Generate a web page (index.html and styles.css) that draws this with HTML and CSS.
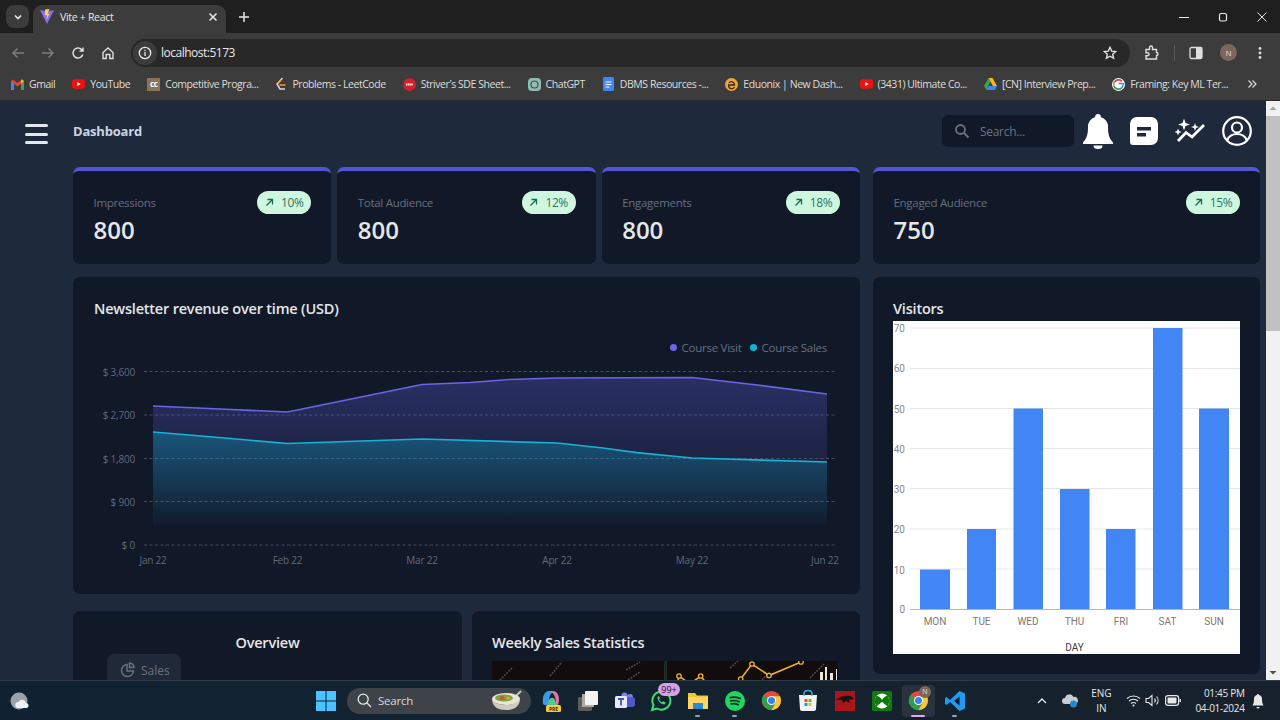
FILE: index.html
```html
<!DOCTYPE html>
<html>
<head>
<title>Vite + React</title>
<meta charset="utf-8" />
<link rel="stylesheet" href="styles.css">
</head>
<body>
<svg class="defs" width="0" height="0">
  <defs>
    <symbol id="chrome" viewBox="0 0 24 24">
      <circle cx="12" cy="12" r="11" fill="#e5483c"/>
      <path d="M12 12 2.5 17.5A11 11 0 0 1 3 5.6Z" fill="#2f9e4f"/>
      <path d="M12 12 2.5 17.5A11 11 0 0 0 12 23l5.5-9Z" fill="#2f9e4f"/>
      <path d="M12 7h9.6A11 11 0 0 1 12 23l5-9Z" fill="#f9c933"/>
      <circle cx="12" cy="12" r="5.2" fill="#fff"/>
      <circle cx="12" cy="12" r="4" fill="#3b82e8"/>
    </symbol>
    <symbol id="yt" viewBox="0 0 14 12">
      <rect y="1" width="14" height="10" rx="3" fill="#f01010"/>
      <path d="M5.6 3.8v4.4L9.4 6Z" fill="#fff"/>
    </symbol>
  </defs>
</svg>

<div class="tabstrip">
  <div class="tabmenu"><svg width="10" height="10" viewBox="0 0 10 10"><path d="M2 3.5 5 6.5 8 3.5" fill="none" stroke="#e8e8e8" stroke-width="1.6"/></svg></div>
  <div class="tab">
    <svg width="14" height="15" viewBox="0 0 14 15"><path d="M0 1 7 15 14 1 7 2.5Z" fill="#8a6cf5"/><path d="M5 .5 9.5 0 7.6 5 9.5 4.5 6.5 11 7 6 5 6.5Z" fill="#fcd34d"/></svg>
    <span class="tabtitle">Vite + React</span>
    <svg class="tabclose" width="10" height="10" viewBox="0 0 10 10"><path d="M1.5 1.5 8.5 8.5M8.5 1.5 1.5 8.5" stroke="#e8e8e8" stroke-width="1.5"/></svg>
  </div>
  <svg class="newtab" width="12" height="12" viewBox="0 0 12 12"><path d="M6 1v10M1 6h10" stroke="#e8e8e8" stroke-width="1.5"/></svg>
  <div class="winbtns">
    <svg width="10" height="10" viewBox="0 0 10 10"><path d="M0 5.5h10" stroke="#e8e8e8"/></svg>
    <svg width="10" height="10" viewBox="0 0 10 10"><rect x="1.5" y="1.5" width="7" height="7.5" rx="1.5" fill="none" stroke="#e8e8e8" stroke-width="1.2"/></svg>
    <svg width="10" height="10" viewBox="0 0 10 10"><path d="M.5.5l9 9M9.5.5l-9 9" stroke="#e8e8e8"/></svg>
  </div>
</div>

<div class="toolbar">
  <svg class="navicon" width="14" height="14" viewBox="0 0 14 14"><path d="M13 7H2M6.5 2.5 2 7l4.500 4.500" fill="none" stroke="#7e7e7e" stroke-width="1.5"/></svg>
  <svg class="navicon" width="14" height="14" viewBox="0 0 14 14"><path d="M1 7h11M7.500 2.500 12 7l-4.500 4.500" fill="none" stroke="#7e7e7e" stroke-width="1.500"/></svg>
  <svg class="navicon" width="14" height="14" viewBox="0 0 14 14"><path d="M11.800 8.500A5 5 0 1 1 10.500 3.400L12 5M12 1.500V5H8.500" fill="none" stroke="#dedede" stroke-width="1.500"/></svg>
  <svg class="navicon" width="14" height="14" viewBox="0 0 14 14"><path d="M2 6.500 7 2l5 4.500V12.500H8.800V8.500H5.200v4H2Z" fill="none" stroke="#dedede" stroke-width="1.400"/></svg>
  <div class="omnibox">
    <span class="siteinfo"><svg width="14" height="14" viewBox="0 0 14 14"><circle cx="7" cy="7" r="5.700" fill="none" stroke="#e8e8e8" stroke-width="1.300"/><path d="M7 6v4M7 3.800v1.200" stroke="#e8e8e8" stroke-width="1.300"/></svg></span>
    <span class="url">localhost:5173</span>
    <svg class="star" width="14" height="14" viewBox="0 0 14 14"><path d="M7 1.300 8.700 5.100 12.800 5.500 9.700 8.200 10.600 12.300 7 10.200 3.400 12.300 4.300 8.200 1.200 5.500 5.300 5.100Z" fill="none" stroke="#e8e8e8" stroke-width="1.300"/></svg>
  </div>
  <div class="toolright">
    <svg width="16" height="16" viewBox="0 0 16 16"><path d="M2 4.500H5.500V2.500A1.500 1.500 0 0 1 8.500 2.500V4.500H12.500V7.500A1.500 1.500 0 0 1 12.500 10.500V14H2V10.800H3.500A1.500 1.500 0 0 0 3.500 7.800H2Z" fill="none" stroke="#dedede" stroke-width="1.400"/></svg>
    <span class="toolsep"></span>
    <svg width="14" height="14" viewBox="0 0 14 14"><rect x="1" y="1.500" width="12" height="11" rx="1.500" fill="none" stroke="#dedede" stroke-width="1.300"/><rect x="7" y="1.500" width="6" height="11" fill="#dedede"/></svg>
    <span class="avatar">N</span>
    <svg class="toolmenu" width="4" height="14" viewBox="0 0 4 14"><circle cx="2" cy="2.500" r="1.400" fill="#dedede"/><circle cx="2" cy="7" r="1.400" fill="#dedede"/><circle cx="2" cy="11.500" r="1.400" fill="#dedede"/></svg>
  </div>
</div>

<div class="bookmarks">
  <span class="mark"><svg width="13" height="11" viewBox="0 0 13 11"><path d="M0 2v9h3V5L6.500 7.500 10 5v6h3V2L11 .5 6.500 4 2 .5Z" fill="#ea4335"/><path d="M0 2v9h3V5Z" fill="#4285f4"/><path d="M13 2v9h-3V5Z" fill="#34a853"/><path d="M13 2 11 .500 10 1.300V5Z" fill="#fbbc04"/></svg>Gmail</span>
  <span class="mark"><svg width="13" height="12"><use href="#yt"/></svg>YouTube</span>
  <span class="mark"><span class="ccbox">cc</span>Competitive Progra...</span>
  <span class="mark"><svg width="12" height="14" viewBox="0 0 12 14"><path d="M7.500 1 2 7l3 5h5" fill="none" stroke="#d9d9d9" stroke-width="1.500"/><path d="M4.500 8h6" stroke="#f89f1b" stroke-width="1.500"/><path d="M3 6.500 6 3" stroke="#f89f1b" stroke-width="1.500"/></svg>Problems - LeetCode</span>
  <span class="mark"><svg width="13" height="13" viewBox="0 0 13 13"><circle cx="6.500" cy="6.500" r="6.500" fill="#d71f2c"/><path d="M3 6.500h7" stroke="#fff" stroke-width="1.800" stroke-dasharray="1.500 .6"/></svg>Striver's SDE Sheet...</span>
  <span class="mark"><svg width="13" height="13" viewBox="0 0 13 13"><rect width="13" height="13" rx="4" fill="#8fbcae"/><circle cx="6.500" cy="6.500" r="3.500" fill="none" stroke="#36584f" stroke-width="1.200"/></svg>ChatGPT</span>
  <span class="mark"><svg width="13" height="14" viewBox="0 0 13 14"><rect x="1" width="11" height="14" rx="1.500" fill="#4285f4"/><path d="M3.500 5h6M3.500 7.500h6M3.500 10h4" stroke="#fff" stroke-width="1.200"/></svg>DBMS Resources -...</span>
  <span class="mark"><svg width="13" height="13" viewBox="0 0 13 13"><circle cx="6.500" cy="6.500" r="6.500" fill="#f0a63c"/><path d="M3 7h6.500A3.200 3.200 0 0 0 3.800 4.800M3.500 7.500A3.200 3.200 0 0 0 9.500 9" fill="none" stroke="#3a2a10" stroke-width="1.300"/></svg>Eduonix | New Dash...</span>
  <span class="mark"><svg width="13" height="12"><use href="#yt"/></svg>(3431) Ultimate Co...</span>
  <span class="mark"><svg width="13" height="12" viewBox="0 0 13 12"><path d="M4.500 0h4L13 8H9Z" fill="#fbbc04"/><path d="M4.500 0 0 8l2 3.500L6.500 3.500Z" fill="#34a853"/><path d="M2 12 4.200 8H13l-2 4Z" fill="#4285f4"/></svg>[CN] Interview Prep...</span>
  <span class="mark"><svg width="13" height="13" viewBox="0 0 13 13"><circle cx="6.500" cy="6.500" r="6.500" fill="#fff"/><path d="M6.600 5.500h4.500v1.100A4.700 4.700 0 1 1 9.800 3.200" fill="none" stroke="#4285f4" stroke-width="1.500"/><path d="M2.300 4.500A4.700 4.700 0 0 1 9.800 3.200" fill="none" stroke="#ea4335" stroke-width="1.500"/><path d="M2.300 8.500A4.700 4.700 0 0 1 2.300 4.500" fill="none" stroke="#fbbc04" stroke-width="1.500"/><path d="M2.300 8.500A4.700 4.700 0 0 0 9.800 9.800" fill="none" stroke="#34a853" stroke-width="1.500"/></svg>Framing: Key ML Ter...</span>
  <svg class="moremarks" width="10" height="10" viewBox="0 0 10 10"><path d="M1.500 1.500 5 5 1.500 8.500M5.500 1.500 9 5 5.500 8.500" fill="none" stroke="#dedede" stroke-width="1.200"/></svg>
</div>

<div class="viewport">
  <div class="page">
    <aside class="sidebar">
      <div class="burger"><span></span><span></span><span></span></div>
    </aside>
    <main class="content">
      <header class="topbar">
        <span class="pagetitle">Dashboard</span>
        <div class="topactions">
          <div class="searchbox">
            <svg width="16" height="16" viewBox="0 0 16 16"><circle cx="6.500" cy="6.500" r="4.500" fill="none" stroke="#6b7280" stroke-width="1.800"/><path d="M10 10l4.500 4.500" stroke="#6b7280" stroke-width="2"/></svg>
            <span>Search...</span>
          </div>
          <svg class="bell" width="30" height="35" viewBox="0 0 30 35"><path d="M15 0a2.800 2.800 0 0 1 2.800 3A10 10 0 0 1 25 13c0 7 1 11 5 15.500V30H0v-1.500C4 24 5 20 5 13a10 10 0 0 1 7.200-10A2.800 2.800 0 0 1 15 0Z" fill="#fff"/><path d="M10.500 31.500h9a4.500 3.500 0 0 1-9 0Z" fill="#fff"/></svg>
          <svg class="chat" width="28" height="28" viewBox="0 0 28 28"><path d="M7 0h14a7 7 0 0 1 7 7v14a7 7 0 0 1-7 7H3a3 3 0 0 1-3-3V7a7 7 0 0 1 7-7Z" fill="#fff"/><path d="M7 10h14v3.500H7ZM7 16h9v3.500H7Z" fill="#1e293b"/></svg>
          <svg class="spark" width="30" height="28" viewBox="0 0 30 28"><path d="M3 24 11 15.500 17 20 29 8" fill="none" stroke="#fff" stroke-width="2.800"/><path d="M9 1.500 10.500 6 15 7.500 10.500 9 9 13.500 7.500 9 3 7.500 7.500 6ZM20 6 21 9 24 10 21 11 20 14 19 11 16 10 19 9ZM3 11.500 4 14 6.500 15 4 16 3 18.500 2 16-.5 15 2 14Z" fill="#fff"/></svg>
          <svg class="user" width="30" height="30" viewBox="0 0 30 30"><circle cx="15" cy="15" r="13.800" fill="none" stroke="#fff" stroke-width="2.200"/><circle cx="15" cy="11.500" r="5" fill="none" stroke="#fff" stroke-width="2.200"/><path d="M5 24.500c2-5 6-6.500 10-6.500s8 1.500 10 6.500" fill="none" stroke="#fff" stroke-width="2.200"/></svg>
        </div>
      </header>

      <div class="columns">
        <div class="leftcol">
          <div class="statrow">
            <div class="card stat">
              <div class="statinfo"><span class="statlabel">Impressions</span><span class="statvalue">800</span></div>
              <span class="pill"><svg width="9" height="9" viewBox="0 0 9 9"><path d="M1.500 7.500 7 2M2.500 1.500H7.500V6.500" fill="none" stroke="#166b55" stroke-width="1.300"/></svg>10%</span>
            </div>
            <div class="card stat">
              <div class="statinfo"><span class="statlabel">Total Audience</span><span class="statvalue">800</span></div>
              <span class="pill"><svg width="9" height="9" viewBox="0 0 9 9"><path d="M1.500 7.500 7 2M2.500 1.500H7.500V6.500" fill="none" stroke="#166b55" stroke-width="1.300"/></svg>12%</span>
            </div>
            <div class="card stat">
              <div class="statinfo"><span class="statlabel">Engagements</span><span class="statvalue">800</span></div>
              <span class="pill"><svg width="9" height="9" viewBox="0 0 9 9"><path d="M1.500 7.500 7 2M2.500 1.500H7.500V6.500" fill="none" stroke="#166b55" stroke-width="1.300"/></svg>18%</span>
            </div>
          </div>

          <section class="card revenue">
            <h2 class="cardtitle">Newsletter revenue over time (USD)</h2>
            <div class="legend">
              <span class="legenditem"><i class="dot dot-visit"></i>Course Visit</span>
              <span class="legenditem"><i class="dot dot-sales"></i>Course Sales</span>
            </div>
            <svg class="areachart" width="787" height="220" viewBox="73 360 787 220">
              <defs>
                <linearGradient id="gradVisit" x1="0" y1="377" x2="0" y2="530" gradientUnits="userSpaceOnUse">
                  <stop offset="0" stop-color="#6366f1" stop-opacity=".3"/>
                  <stop offset="1" stop-color="#6366f1" stop-opacity="0"/>
                </linearGradient>
                <linearGradient id="gradSales" x1="0" y1="432" x2="0" y2="530" gradientUnits="userSpaceOnUse">
                  <stop offset="0" stop-color="#06b6d4" stop-opacity=".32"/>
                  <stop offset="1" stop-color="#06b6d4" stop-opacity="0"/>
                </linearGradient>
              </defs>
              <g class="gridlines">
                <path d="M144 371.500H836M144 415H836M144 458.500H836M144 501.500H836M144 545H836"/>
              </g>
              <path d="M153 406 220 409 287.500 412 422 384.500 470 382.500 557 378 692 377.500 757 385 827 394V530H153Z" fill="url(#gradVisit)"/>
              <path d="M153 432 213 437 287.500 443.500 422 439 557 443 603 448 637 452.700 692 458 827 462V530H153Z" fill="url(#gradSales)"/>
              <path d="M153 406 220 409 287.500 412 422 384.500 470 382.500 510 379.500 557 378 692 377.500 757 385 827 394" fill="none" stroke="#6c63e8" stroke-width="1.700"/>
              <path d="M153 432 213 437 287.500 443.500 422 439 557 443 603 448 637 452.700 692 458 827 462" fill="none" stroke="#14b4d2" stroke-width="1.700"/>
              <g class="yaxis">
                <text x="135" y="376">$ 3,600</text>
                <text x="135" y="419">$ 2,700</text>
                <text x="135" y="462.500">$ 1,800</text>
                <text x="135" y="506">$ 900</text>
                <text x="135" y="549">$ 0</text>
              </g>
              <g class="xaxis">
                <text x="153" y="564">Jan 22</text>
                <text x="287.500" y="564">Feb 22</text>
                <text x="422" y="564">Mar 22</text>
                <text x="557" y="564">Apr 22</text>
                <text x="692" y="564">May 22</text>
                <text x="825" y="564">Jun 22</text>
              </g>
            </svg>
          </section>

          <div class="bottomrow">
            <section class="card overview">
              <h2 class="cardtitle centered">Overview</h2>
              <div class="salestab">
                <svg width="16" height="16" viewBox="0 0 16 16"><path d="M7 2.500a6 6 0 1 0 6.500 6.500H7Z" fill="none" stroke="#6b7280" stroke-width="1.500"/><path d="M9.500 1v4.500H14A5 5 0 0 0 9.500 1Z" fill="none" stroke="#6b7280" stroke-width="1.500"/></svg>
                <span>Sales</span>
              </div>
            </section>
            <section class="card weekly">
              <h2 class="cardtitle">Weekly Sales Statistics</h2>
              <svg class="weeklyimg" width="346" height="60" viewBox="492 661 346 60">
                <rect x="492" y="661" width="346" height="60" fill="#120c0c"/>
                <path d="M500 680 512 668M550 676 562 662M626 670 640 662M730 668 738 661M628 680 640 672M762 680 770 672M810 678 824 664" stroke="#4a4a4a" stroke-width="1.500" stroke-dasharray="2 1"/>
                <path d="M664 661h3v24h-3Z" fill="#1d2a22"/>
                <path d="M676 690 679 676 690 684 700.700 676 712 690M731 690 740.700 679 752 664 769 675.500 801 662" fill="none" stroke="#eeb02f" stroke-width="1.600"/>
                <g fill="#120c0c" stroke="#eeb02f" stroke-width="1.300">
                  <circle cx="679" cy="676" r="2.200"/><circle cx="700.700" cy="676" r="2.200"/><circle cx="740.700" cy="679" r="2.200"/><circle cx="752" cy="664" r="2.200"/><circle cx="769" cy="675.500" r="2.200"/><circle cx="801" cy="662" r="2.200"/>
                </g>
                <path d="M820 672h3v8h-3ZM825 667h2v13h-2ZM830 673h3v7h-3ZM836 669h1v11h-1Z" fill="#eee6d4"/>
              </svg>
            </section>
          </div>
        </div>

        <div class="rightcol">
          <div class="card stat">
            <div class="statinfo"><span class="statlabel">Engaged Audience</span><span class="statvalue">750</span></div>
            <span class="pill"><svg width="9" height="9" viewBox="0 0 9 9"><path d="M1.500 7.500 7 2M2.500 1.500H7.500V6.500" fill="none" stroke="#166b55" stroke-width="1.300"/></svg>15%</span>
          </div>
          <section class="card visitors">
            <h2 class="cardtitle">Visitors</h2>
            <svg class="barchart" width="347" height="333" viewBox="893 321 347 333">
              <rect x="893" y="321" width="347" height="333" fill="#fff"/>
              <path d="M910 328H1240M910 368.500H1240M910 408.500H1240M910 448.500H1240M910 488.500H1240M910 529H1240M910 569H1240" stroke="#e6e6e6"/>
              <g fill="#4285f4">
                <rect x="920" y="569.500" width="30" height="40"/>
                <rect x="967" y="529" width="29" height="80.500"/>
                <rect x="1013.500" y="408.500" width="29.500" height="201"/>
                <rect x="1060" y="489" width="29.500" height="120.500"/>
                <rect x="1106" y="529" width="29.500" height="80.500"/>
                <rect x="1153" y="328" width="29.500" height="281.500"/>
                <rect x="1199" y="408.500" width="30" height="201"/>
              </g>
              <path d="M910 609.500H1240" stroke="#b5b5bd"/>
              <g class="bary">
                <text x="905" y="332">70</text>
                <text x="905" y="372">60</text>
                <text x="905" y="412.500">50</text>
                <text x="905" y="452.500">40</text>
                <text x="905" y="493">30</text>
                <text x="905" y="533">20</text>
                <text x="905" y="573.500">10</text>
                <text x="905" y="613">0</text>
              </g>
              <g class="barx">
                <text x="935" y="624.500">MON</text>
                <text x="981.500" y="624.500">TUE</text>
                <text x="1028" y="624.500">WED</text>
                <text x="1074.500" y="624.500">THU</text>
                <text x="1121" y="624.500">FRI</text>
                <text x="1167.500" y="624.500">SAT</text>
                <text x="1214" y="624.500">SUN</text>
              </g>
              <text class="bartitle" x="1074.500" y="651">DAY</text>
            </svg>
          </section>
        </div>
      </div>
    </main>
  </div>
  <div class="scrollbar">
    <svg class="scrollbtn" width="14" height="15" viewBox="0 0 14 15"><path d="M3.500 9 7 5.500 10.500 9Z" fill="#a3a3a3"/></svg>
    <div class="scrollthumb"></div>
    <svg class="scrollbtn scrolldown" width="14" height="15" viewBox="0 0 14 15"><path d="M3.500 6 7 9.500 10.500 6Z" fill="#505050"/></svg>
  </div>
</div>

<footer class="taskbar">
  <svg class="weather" width="20" height="20" viewBox="0 0 20 20"><circle cx="9" cy="10" r="8.500" fill="#9aa3ac"/><path d="M8 17a3 3 0 0 1 .5-6 4 4 0 0 1 7.500 1 2.600 2.600 0 0 1 1 5Z" fill="#eef1f4"/></svg>
  <div class="taskcenter">
    <svg class="startbtn" width="20" height="20" viewBox="0 0 20 20"><path d="M0 0h9.500v9.500H0ZM10.500 0H20v9.500h-9.500ZM0 10.500h9.500V20H0ZM10.500 10.500H20V20h-9.500Z" fill="#4cc2ff"/></svg>
    <div class="tasksearch">
      <svg width="15" height="15" viewBox="0 0 15 15"><circle cx="6.200" cy="6.200" r="5" fill="none" stroke="#e8e8e8" stroke-width="1.300"/><path d="M10 10l4 4" stroke="#e8e8e8" stroke-width="1.300"/></svg>
      <span>Search</span>
      <svg class="soup" width="32" height="22" viewBox="0 0 32 22"><path d="M24 7 30 1" stroke="#c9c9c9" stroke-width="2"/><ellipse cx="15" cy="9" rx="14" ry="6" fill="#e8e4da"/><ellipse cx="13" cy="8" rx="9" ry="3.500" fill="#7fa23c"/><circle cx="11" cy="8" r="2" fill="#d8503a"/><circle cx="17" cy="8" r="1.600" fill="#e8a33a"/><path d="M1 10c1 7 6 10 14 10s13-3 14-10c-3 3-8 5-14 5S4 13 1 10Z" fill="#cfcabd"/></svg>
    </div>
    <span class="taskicon"><svg width="20" height="22" viewBox="0 0 20 22"><path d="M2 14C1 6 4 1 8 1h5c-3 2-5 5-5 9s-2 7-6 4Z" fill="#3e9ae8"/><path d="M8 1h4c4 0 6 4 6 9 0 3-1 6-4 6 2-6 0-13-6-15Z" fill="#e86fa8"/><path d="M8 10c2-3 5-3 6 0l2 5H6Z" fill="#55c78c"/><rect x="5" y="15" width="15" height="7" rx="1.500" fill="#fdc83c"/><text class="pre" x="12.500" y="21">PRE</text></svg></span>
    <span class="taskicon"><svg width="20" height="20" viewBox="0 0 20 20"><rect y="6" width="14" height="14" rx="1.500" fill="#5d5d5d"/><rect x="4" y="3" width="12" height="13" fill="#a9a9a9"/><rect x="7" width="13" height="14" rx="1" fill="#f3f3f3"/></svg></span>
    <span class="taskicon"><svg width="20" height="18" viewBox="0 0 20 18"><circle cx="15" cy="5" r="3" fill="#7b83eb"/><rect x="10" y="5" width="10" height="10" rx="3" fill="#5059c9"/><circle cx="9.500" cy="3.500" r="3" fill="#7b83eb"/><rect y="4" width="12" height="12" rx="1.500" fill="#e8ebfa"/><path d="M3 7h6M6 7v6.500" stroke="#4b53bc" stroke-width="1.800"/></svg></span>
    <span class="taskicon withbadge"><svg width="22" height="22" viewBox="0 0 22 22"><path d="M2 20 3.500 15A9 9 0 1 1 7 18.500Z" fill="none" stroke="#3ddc74" stroke-width="2"/><path d="M7.500 7c-.5 3 3.500 7.500 7 7.500l1-2-2.500-1.200-1 1c-1.500-.5-2.500-1.700-3-3l1-1L8.800 6Z" fill="#3ddc74"/></svg><span class="badge">99+</span></span>
    <span class="taskicon"><svg width="20" height="20" viewBox="0 0 20 20"><path d="M0 2h7l2 2.500h11V18H0Z" fill="#f7c52e"/><rect y="6" width="20" height="12" fill="#fcd766"/><rect x="5" y="12" width="10" height="6" fill="#2a8ad4"/></svg><i class="opendot"></i></span>
    <span class="taskicon"><svg width="20" height="20" viewBox="0 0 20 20"><circle cx="10" cy="10" r="10" fill="#1ed760"/><path d="M4.500 6.800c4-1.100 8-.8 11.300 1M5 10c3.500-.9 7-.6 9.800 1M5.500 13c3-.7 5.800-.4 8.300 1" fill="none" stroke="#10261a" stroke-width="1.600"/></svg><i class="opendot"></i></span>
    <span class="taskicon"><svg width="21" height="21"><use href="#chrome"/></svg></span>
    <span class="taskicon"><svg width="20" height="21" viewBox="0 0 20 21"><path d="M1 5h18l-1 14a2 2 0 0 1-2 2H4a2 2 0 0 1-2-2Z" fill="#f4f4f4"/><path d="M6 6V3.500a4 3 0 0 1 8 0V6" fill="none" stroke="#3ab4e8" stroke-width="1.500"/><path d="M6.500 9h3v3h-3Z" fill="#f25022"/><path d="M10.500 9h3v3h-3Z" fill="#7fba00"/><path d="M6.500 13h3v3h-3Z" fill="#00a4ef"/><path d="M10.500 13h3v3h-3Z" fill="#ffb900"/></svg></span>
    <span class="taskicon"><svg width="20" height="20" viewBox="0 0 20 20"><rect width="20" height="20" fill="#a8161c"/><path d="M1 9C5 5 10 4 16 5l3 3-5 1 1 3-4-2-3 2-1-3Z" fill="#1b1212"/></svg></span>
    <span class="taskicon"><svg width="20" height="20" viewBox="0 0 20 20"><rect width="20" height="20" rx="1.500" fill="#0f7b0f"/><circle cx="10" cy="10" r="7.500" fill="#fff"/><path d="M4.500 4.500C7 5 9 7 10 9c1-2 3-4 5.500-4.500L18 10l-2.500 5.500C13 13.500 11.500 12 10 11c-1.500 1-3 2.500-5.500 4.500L2 10Z" fill="#0f7b0f"/></svg></span>
    <span class="taskicon activeicon"><svg width="21" height="21"><use href="#chrome"/></svg><span class="minibadge">N</span><i class="activebar"></i></span>
    <span class="taskicon"><svg width="20" height="20" viewBox="0 0 20 20"><path d="M14.500 0 20 2.500v15L14.500 20 5 11 1.500 14 0 13V7l1.500-1L5 9Z" fill="#1f9cf0"/><path d="M14.500 5.500 9 10l5.500 4.500Z" fill="#0f1b28"/></svg><i class="opendot"></i></span>
  </div>
  <div class="tray">
    <svg width="10" height="10" viewBox="0 0 10 10"><path d="M1 7 5 3l4 4" fill="none" stroke="#e8e8e8" stroke-width="1.300"/></svg>
    <svg class="traycloud" width="16" height="15" viewBox="0 0 16 15"><path d="M3 11a3 3 0 0 1 0-6 4.500 4.500 0 0 1 8.500-1A3.500 3.500 0 0 1 13 11Z" fill="#c7cdd3"/><circle cx="11.500" cy="11" r="3.500" fill="#2a86c8"/></svg>
    <div class="lang"><span>ENG</span><span>IN</span></div>
    <svg class="traywifi" width="15" height="13" viewBox="0 0 15 13"><path d="M1 4.500a9.500 9.500 0 0 1 13 0M3 7a6.500 6.500 0 0 1 9 0M5 9.500a3.500 3.500 0 0 1 5 0" fill="none" stroke="#e8e8e8" stroke-width="1.100"/><circle cx="7.500" cy="11.500" r="1" fill="#e8e8e8"/></svg>
    <svg width="15" height="13" viewBox="0 0 15 13"><path d="M1 4.500h2.500L7 1.500v10l-3.500-3H1Z" fill="none" stroke="#e8e8e8" stroke-width="1.100"/><path d="M9.500 4.500a3 3 0 0 1 0 4M11.500 2.500a6 6 0 0 1 0 8" fill="none" stroke="#e8e8e8" stroke-width="1.100"/></svg>
    <svg class="traybatt" width="16" height="11" viewBox="0 0 16 11"><rect x=".6" y=".6" width="13" height="9.800" rx="2.400" fill="none" stroke="#e8e8e8" stroke-width="1.200"/><rect x="2.500" y="2.500" width="9" height="6" rx="1" fill="#e8e8e8"/><rect x="14.500" y="4" width="1.500" height="3" fill="#e8e8e8"/></svg>
    <div class="clock"><span>01:45 PM</span><span>04-01-2024</span></div>
    <svg class="traybell" width="12" height="16" viewBox="0 0 12 16"><path d="M6 1a1 1 0 0 1 1 1 4 4 0 0 1 3 4c0 3 .5 5 1.500 6.500H.5C1.500 11 2 9 2 6a4 4 0 0 1 3-4 1 1 0 0 1 1-1Z" fill="#e8e8e8"/><path d="M4.500 14h3a1.500 1.500 0 0 1-3 0Z" fill="#e8e8e8"/></svg>
  </div>
</footer>
</body>
</html>
```

FILE: styles.css
```css
* {
  box-sizing: border-box;
}

html, body {
  margin: 0;
  padding: 0;
  height: 720px;
  overflow: hidden;
}

body {
  display: flex;
  flex-direction: column;
  font-family: "Open Sans", "Noto Sans", sans-serif;
  background: #1e293b;
}

h2 {
  margin: 0;
}

.defs {
  position: absolute;
}

/* browser frame */
.tabstrip {
  height: 33px;
  flex: none;
  display: flex;
  align-items: flex-end;
  background: #1f1f1f;
  padding-left: 6px;
}

.tabmenu {
  width: 23px;
  height: 23px;
  margin: 0 4px 5px 0;
  border-radius: 8px;
  background: #3c3c3c;
  display: flex;
  align-items: center;
  justify-content: center;
}

.tab {
  width: 193px;
  height: 28px;
  padding: 0 8px 5px 7px;
  border-radius: 9px 9px 0 0;
  background: #3c3c3c;
  display: flex;
  align-items: center;
  gap: 6px;
  color: #e8e8e8;
  font-size: 10.500px;
  letter-spacing: -.3px;
}

.tabtitle {
  flex: 1;
}

.newtab {
  margin: 0 0 10px 12px;
}

.winbtns {
  margin-left: auto;
  display: flex;
  gap: 29px;
  padding: 0 13px 11px 0;
  align-items: center;
}

.toolbar {
  height: 34px;
  flex: none;
  display: flex;
  align-items: center;
  background: #3c3c3c;
  padding: 5px 0 0 11px;
  gap: 16px;
}

.navicon {
  flex: none;
}

.omnibox {
  width: 999px;
  height: 28px;
  border-radius: 14px;
  background: #282828;
  display: flex;
  align-items: center;
  color: #e8e8e8;
  font-size: 12px;
  letter-spacing: -.5px;
  padding-right: 13px;
}

.siteinfo {
  width: 24px;
  height: 24px;
  margin-left: 2px;
  border-radius: 50%;
  background: #3c3c3c;
  display: flex;
  align-items: center;
  justify-content: center;
}

.url {
  margin-left: 4px;
  flex: 1;
}

.toolright {
  display: flex;
  align-items: center;
  margin-left: -2px;
  gap: 14px;
}

.toolsep {
  width: 1px;
  height: 16px;
  background: #5a5a5a;
}

.avatar {
  width: 17px;
  height: 17px;
  margin-left: 3px;
  border-radius: 50%;
  background: #7d665c;
  color: #e8e0da;
  font-size: 8px;
  display: flex;
  align-items: center;
  justify-content: center;
}

.toolmenu {
  margin-left: 7px;
}

.bookmarks {
  height: 34px;
  flex: none;
  display: flex;
  align-items: center;
  background: #3c3c3c;
  padding: 1px 0 0 11px;
  gap: 17px;
  color: #dcdcdc;
  font-size: 10.500px;
  letter-spacing: -.45px;
  border-bottom: 1px solid #2a2a2a;
  white-space: nowrap;
}

.mark {
  display: flex;
  align-items: center;
  gap: 5px;
}

.ccbox {
  width: 13px;
  height: 13px;
  background: #8a7458;
  color: #fff;
  font-size: 8px;
  font-weight: 700;
  line-height: 12px;
  text-align: center;
}

.moremarks {
  margin-left: auto;
  margin-right: 23px;
}

/* page */
.viewport {
  flex: 1;
  min-height: 0;
  display: flex;
  overflow: hidden;
}

.page {
  flex: 1;
  min-width: 0;
  display: flex;
  overflow: hidden;
  background: #1e293b;
}

.sidebar {
  width: 73px;
  flex: none;
  padding: 23px 0 0 25px;
}

.burger {
  width: 23px;
  display: flex;
  flex-direction: column;
  gap: 5.500px;
}

.burger span {
  height: 3px;
  border-radius: 2px;
  background: #e2e8f0;
}

.content {
  flex: 1;
  min-width: 0;
  padding-right: 6px;
}

.topbar {
  height: 66px;
  display: flex;
  align-items: center;
  justify-content: space-between;
  padding: 0 8px 6px 0;
}

.pagetitle {
  font-size: 13px;
  font-weight: 700;
  letter-spacing: -.2px;
  color: #cbd5e1;
}

.topactions {
  display: flex;
  align-items: center;
  gap: 17px;
}

.searchbox {
  width: 132px;
  height: 32px;
  margin-right: -8px;
  padding-left: 12px;
  border-radius: 6px;
  background: #111827;
  display: flex;
  align-items: center;
  gap: 10px;
  color: #6b7280;
  font-size: 12px;
  letter-spacing: -.3px;
}

.columns {
  display: grid;
  grid-template-columns: 787px 387px;
  gap: 13px;
}

.leftcol, .rightcol {
  display: flex;
  flex-direction: column;
  gap: 13px;
}

.statrow {
  display: grid;
  grid-template-columns: repeat(3, 1fr);
  gap: 6px;
}

.card {
  border-radius: 7px;
  background: #111827;
}

.stat {
  height: 97px;
  padding: 20px 20px 0 20.500px;
  border-top: 4px solid #5355d6;
  display: flex;
  justify-content: space-between;
  align-items: flex-start;
}

.statinfo {
  display: flex;
  flex-direction: column;
}

.statlabel {
  margin-top: 2px;
  font-size: 11.500px;
  letter-spacing: -.3px;
  line-height: 20px;
  color: #667080;
}

.statvalue {
  margin-top: 0;
  font-size: 24px;
  line-height: 34px;
  font-weight: 600;
  color: #e5e7eb;
}

.pill {
  width: 54px;
  height: 23px;
  border-radius: 12px;
  background: #cff7e0;
  color: #2f7566;
  font-size: 12px;
  letter-spacing: -.4px;
  display: flex;
  align-items: center;
  justify-content: center;
  gap: 7px;
}

.revenue {
  height: 317px;
  padding-top: 22px;
}

.cardtitle {
  font-size: 14.500px;
  letter-spacing: -.2px;
  line-height: 20px;
  font-weight: 600;
  color: #e5e7eb;
}

.revenue .cardtitle {
  padding-left: 21px;
}

.legend {
  height: 41px;
  padding: 20px 33px 0 0;
  display: flex;
  justify-content: flex-end;
  gap: 8px;
}

.legenditem {
  display: flex;
  align-items: center;
  gap: 5px;
  height: 16px;
  font-size: 11.500px;
  letter-spacing: -.25px;
  color: #667080;
}

.dot {
  width: 7px;
  height: 7px;
  border-radius: 50%;
}

.dot-visit {
  background: #6c63f0;
}

.dot-sales {
  background: #0fb5d6;
}

.areachart, .barchart, .weeklyimg {
  display: block;
}

.gridlines path {
  fill: none;
  stroke: #434c5a;
  stroke-width: 1;
  stroke-dasharray: 3 2.500;
}

.yaxis text, .xaxis text {
  font-size: 10px;
  letter-spacing: -.2px;
  fill: #5f6a7a;
}

.yaxis text {
  text-anchor: end;
}

.xaxis text {
  text-anchor: middle;
}

.bottomrow {
  margin-top: 4px;
  display: grid;
  grid-template-columns: 389px 388px;
  gap: 10px;
}

.overview, .weekly {
  height: 300px;
  padding-top: 22px;
}

.centered {
  text-align: center;
}

.salestab {
  width: 74px;
  height: 40px;
  margin: 1px 0 0 34px;
  border-radius: 7px;
  background: #1f2937;
  display: flex;
  align-items: flex-start;
  gap: 5px;
  padding: 8px 0 0 13px;
  color: #6b7280;
  font-size: 12px;
}

.weekly {
  padding-left: 20px;
}

.weeklyimg {
  margin-top: 8px;
}

.visitors {
  height: 397px;
  padding: 22px 0 0 20px;
}

.barchart {
  margin-top: 2px;
}

.bary text {
  font-family: Roboto, sans-serif;
  font-size: 10px;
  fill: #8a8a8a;
  text-anchor: end;
}

.barx text {
  font-family: Roboto, sans-serif;
  font-size: 10px;
  fill: #7d7770;
  text-anchor: middle;
}

.bartitle {
  font-family: Roboto, sans-serif;
  font-size: 10px;
  fill: #3c3c3c;
  text-anchor: middle;
}

.scrollbar {
  width: 14px;
  flex: none;
  display: flex;
  flex-direction: column;
  background: #f1f1f1;
}

.scrollbtn {
  flex: none;
  display: block;
}

.scrollthumb {
  height: 215px;
  background: #c1c1c1;
}

.scrolldown {
  margin-top: auto;
}

/* windows taskbar */
.taskbar {
  height: 40px;
  flex: none;
  display: flex;
  align-items: center;
  padding-left: 10px;
  background: linear-gradient(90deg, #102232, #14222f 55%, #17212b);
  border-top: 1px solid #2d3a45;
  color: #e8e8e8;
}

.taskbar svg {
  flex: none;
}

.taskcenter {
  margin-left: 286px;
  display: flex;
  align-items: center;
}

.tasksearch {
  width: 184px;
  height: 26px;
  margin: 0 2px 0 11px;
  padding: 0 8px 0 10px;
  border-radius: 13px;
  background: #3d4349;
  display: flex;
  align-items: center;
  gap: 6px;
  font-size: 11.500px;
  letter-spacing: -.2px;
  color: #d8d8d8;
}

.soup {
  margin-left: auto;
}

.taskicon {
  position: relative;
  width: 36.700px;
  height: 32px;
  flex: none;
  display: flex;
  align-items: center;
  justify-content: center;
}

.pre {
  font-size: 5px;
  font-weight: 700;
  fill: #3a2a00;
  text-anchor: middle;
}

.badge {
  position: absolute;
  top: -2px;
  left: 15px;
  width: 22px;
  height: 13px;
  border-radius: 7px;
  background: #d9a0e6;
  color: #2a1030;
  font-size: 9px;
  line-height: 13px;
  text-align: center;
}

.opendot {
  position: absolute;
  bottom: 0;
  left: 15.500px;
  width: 5px;
  height: 2px;
  border-radius: 1px;
  background: #9aa1a8;
}

.activeicon::before {
  content: "";
  position: absolute;
  inset: 0 2px;
  border-radius: 4px;
  background: rgba(255, 255, 255, .08);
}

.activeicon svg {
  position: relative;
}

.minibadge {
  position: absolute;
  top: 1px;
  left: 19px;
  width: 12px;
  height: 12px;
  border-radius: 50%;
  background: #7d665c;
  color: #e8e0da;
  font-size: 7px;
  line-height: 12px;
  text-align: center;
}

.activebar {
  position: absolute;
  bottom: 0;
  left: 11px;
  width: 14px;
  height: 2px;
  border-radius: 1px;
  background: #e6a8e8;
}

.tray {
  margin-left: 64px;
  display: flex;
  align-items: center;
  gap: 15px;
}

.lang, .clock {
  display: flex;
  flex-direction: column;
  font-size: 10px;
  line-height: 15px;
  text-align: center;
  white-space: nowrap;
}

.lang {
  margin: 0 -1px 0 -2px;
}

.traywifi {
  margin-right: -10.500px;
}

.traybatt {
  margin-left: -10.500px;
}

.clock {
  width: 51px;
  margin-left: -2px;
  letter-spacing: -.3px;
  text-align: right;
}

.traybell {
  margin-left: -8px;
}
```
